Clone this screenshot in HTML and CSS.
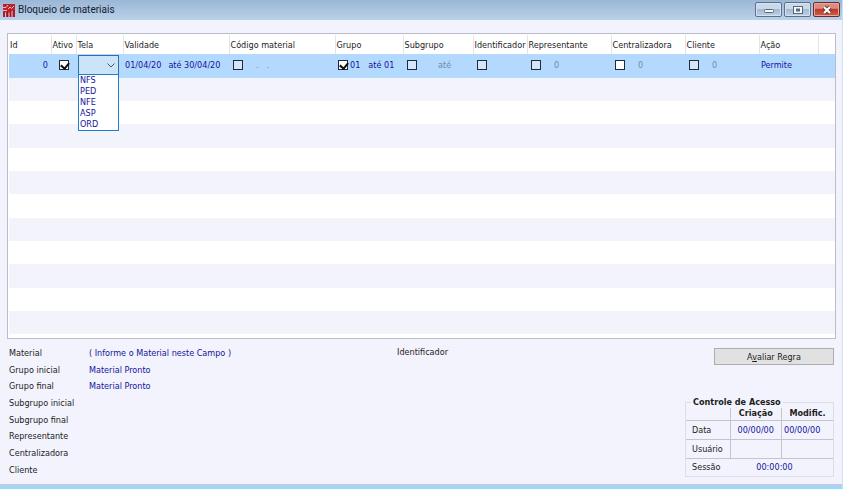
FILE: index.html
```
<!DOCTYPE html>
<html lang="pt-BR">
<head>
<meta charset="utf-8">
<title>Bloqueio de materiais</title>
<link rel="stylesheet" href="styles.css">
</head>
<body>
<div class="window">
  <header class="titlebar">
    <svg class="logo" viewBox="0 0 13 15" aria-hidden="true">
      <path fill="#c0202c" d="M1 1h12v13H1z"/>
      <path fill="none" stroke="#dfc3cf" d="M1 4.500h3L6 2M1 7.500h4M6 6l2-2 1.500 1.500L12 3M3.500 14V9.500M7 14V9.500M10 14V8"/>
      <path fill="none" stroke="#8e1a26" d="M2 14V9M5.500 14V8.500M8.500 14V8M12 14V7"/>
    </svg>
    <h1>Bloqueio de materiais</h1>
    <div class="winbtns">
      <button type="button" class="winbtn" aria-label="Minimizar"><svg viewBox="0 0 12 10"><rect x="1.500" y="4.500" width="9" height="3" rx="1" fill="#f4f6f8" stroke="#59677a"/></svg></button>
      <button type="button" class="winbtn" aria-label="Maximizar"><svg viewBox="0 0 12 10"><rect x="1.500" y="1.500" width="9" height="7" fill="#f6f7f9" stroke="#59677a"/><rect x="4.500" y="4" width="3" height="2" fill="#66758a" stroke="#59677a"/></svg></button>
      <button type="button" class="winbtn close" aria-label="Fechar"><svg viewBox="0 0 12 10"><path d="M3 2l6 6M9 2L3 8" stroke="#6b3134" stroke-width="4"/><path d="M3 2l6 6M9 2L3 8" stroke="#fff" stroke-width="2.200"/></svg></button>
    </div>
  </header>
  <main>
    <div class="listing">
      <table class="grid">
        <colgroup><col class="c-id"><col class="c-ativo"><col class="c-tela"><col class="c-validade"><col class="c-codigo"><col class="c-grupo"><col class="c-sub"><col class="c-ident"><col class="c-repr"><col class="c-centr"><col class="c-cli"><col class="c-acao"><col></colgroup>
        <thead>
          <tr><th>Id</th><th>Ativo</th><th>Tela</th><th>Validade</th><th>Código material</th><th>Grupo</th><th>Subgrupo</th><th>Identificador</th><th>Representante</th><th>Centralizadora</th><th>Cliente</th><th>Ação</th><th></th></tr>
        </thead>
        <tbody>
          <tr class="selected">
            <td class="num">0</td>
            <td><div class="cell center"><input type="checkbox" aria-label="Ativo" checked></div></td>
            <td class="combo-cell"><div class="combo">
              <select aria-label="Tela"><option selected></option><option>NFS</option><option>PED</option><option>NFE</option><option>ASP</option><option>ORD</option></select>
              <svg class="arrow" viewBox="0 0 8 5" aria-hidden="true"><path d="M.5.5L4 4 7.500.5" fill="none" stroke="#4c5866"/></svg>
              <ul class="options"><li>NFS</li><li>PED</li><li>NFE</li><li>ASP</li><li>ORD</li></ul>
            </div></td>
            <td><div class="cell range"><span>01/04/20</span><span>até 30/04/20</span></div></td>
            <td><div class="cell wide inset"><input type="checkbox" aria-label="Código material"><span class="muted dots"><span>.</span><span>.</span></span></div></td>
            <td><div class="cell tight"><input type="checkbox" aria-label="Grupo" checked><span>01</span><span class="until">até 01</span></div></td>
            <td><div class="cell sub inset"><input type="checkbox" aria-label="Subgrupo"><span class="muted">até</span></div></td>
            <td><div class="cell inset"><input type="checkbox" aria-label="Identificador"></div></td>
            <td><div class="cell wide inset"><input type="checkbox" aria-label="Representante"><span class="muted">0</span></div></td>
            <td><div class="cell wide inset"><input type="checkbox" class="white" aria-label="Centralizadora"><span class="muted">0</span></div></td>
            <td><div class="cell wide inset"><input type="checkbox" aria-label="Cliente"><span class="muted">0</span></div></td>
            <td>Permite</td><td></td>
          </tr>
          <tr><td colspan="13"></td></tr><tr><td colspan="13"></td></tr><tr><td colspan="13"></td></tr><tr><td colspan="13"></td></tr><tr><td colspan="13"></td></tr><tr><td colspan="13"></td></tr><tr><td colspan="13"></td></tr><tr><td colspan="13"></td></tr><tr><td colspan="13"></td></tr><tr><td colspan="13"></td></tr><tr><td colspan="13"></td></tr>
        </tbody>
      </table>
    </div>
    <section class="details">
      <dl class="summary">
        <dt>Material</dt><dd>( Informe o Material neste Campo )</dd>
        <dt>Grupo inicial</dt><dd>Material Pronto</dd>
        <dt>Grupo final</dt><dd>Material Pronto</dd>
        <dt>Subgrupo inicial</dt><dd></dd>
        <dt>Subgrupo final</dt><dd></dd>
        <dt>Representante</dt><dd></dd>
        <dt>Centralizadora</dt><dd></dd>
        <dt>Cliente</dt><dd></dd>
      </dl>
      <p class="ident">Identificador</p>
      <div class="side">
        <button type="button" class="evaluate">A<u>v</u>aliar Regra</button>
        <fieldset class="access">
          <legend>Controle de Acesso</legend>
          <table>
            <thead><tr><th class="first"></th><th>Criação</th><th>Modific.</th></tr></thead>
            <tbody>
              <tr><th class="first">Data</th><td>00/00/00</td><td class="left">00/00/00</td></tr>
              <tr><th class="first">Usuário</th><td></td><td></td></tr>
              <tr class="session"><th class="first">Sessão</th><td colspan="2">00:00:00</td></tr>
            </tbody>
          </table>
        </fieldset>
      </div>
    </section>
  </main>
</div>
</body>
</html>
```
FILE: styles.css
```
* { box-sizing: border-box; }
body {
  margin: 0;
  font: 9px/12px "DejaVu Sans Condensed", "DejaVu Sans", sans-serif;
  color: #1c1c1c;
}
.window {
  min-height: 100vh;
  display: flex;
  flex-direction: column;
  background: #f2f3fc;
  border-right: 1px solid #cbe3f7;
  border-bottom: 2px solid #8bdfff;
}
.titlebar {
  height: 20px;
  display: flex;
  align-items: center;
  gap: 3px;
  padding: 0 2px;
  background: linear-gradient(#9bb7d5, #bad1ea);
}
.logo { width: 13px; height: 15px; }
.titlebar h1 {
  flex: 1;
  margin: 0;
  font: 10px/20px Roboto, "Noto Sans", sans-serif;
  color: #14202e;
}
.winbtns { display: flex; gap: 2px; align-self: flex-start; padding-top: 2px; }
.winbtn {
  width: 27px;
  height: 15px;
  padding: 0;
  display: flex;
  align-items: center;
  justify-content: center;
  border: 1px solid #5c728c;
  border-radius: 2px;
  background: linear-gradient(#c9d9ea 45%, #a3bad3 50%, #bcd0e5);
  box-shadow: inset 0 0 0 1px #d5e3f1;
}
.winbtn svg { width: 12px; height: 10px; }
.winbtn.close {
  border-color: #6b2a2c;
  background: linear-gradient(#dc8b7d 40%, #c0392b 50%, #cf5d49);
  box-shadow: inset 0 0 0 1px #e5a89d;
}
main {
  flex: 1;
  padding: 13px 6px 2px 7px;
  border-bottom: 3px solid #bfcbea;
}
.listing {
  padding: 1px 0 4px 1px;
  background: #fff;
  border: 1px solid #b9bcc9;
}
.grid { width: 100%; border-collapse: collapse; table-layout: fixed; }
.c-id { width: 42px; }
.c-ativo { width: 25px; }
.c-tela { width: 47px; }
.c-validade, .c-codigo { width: 106px; }
.c-grupo { width: 68px; }
.c-sub { width: 70px; }
.c-ident { width: 54px; }
.c-repr { width: 84px; }
.c-centr, .c-cli { width: 74px; }
.c-acao { width: 59px; }
.grid th {
  height: 19px;
  padding: 0 0 0 1px;
  text-align: left;
  font-weight: normal;
  white-space: nowrap;
  border-right: 1px solid #e4e4e8;
}
.grid th:last-child { border-right: 0; }
.grid td { height: 23px; padding: 0 2px; white-space: nowrap; color: #14149c; }
.grid tbody tr:nth-child(3n+1) td { height: 24px; }
.grid tbody tr:nth-child(even) { background: #f2f3fb; }
.grid .selected { background: #b3d9ff; }
.grid .selected td { padding-bottom: 2px; }
.grid .selected .num { text-align: right; padding-right: 3px; }
.cell { display: flex; align-items: center; gap: 4px; }
.center { justify-content: center; }
.range { gap: 7px; }
.wide { gap: 13px; }
.inset { padding-left: 2px; }
.dots { display: flex; gap: 8px; }
.tight { gap: 2px; padding-left: 1px; }
.until { padding-left: 6px; }
.sub { gap: 21px; }
.muted { color: #7489a3; }
input[type="checkbox"] {
  appearance: none;
  flex: none;
  width: 10px;
  height: 10px;
  margin: 0;
  border: 1px solid #1f2b3a;
  background: #d3e6fa;
}
input[type="checkbox"]:checked {
  background: #fff;
  position: relative;
}
input[type="checkbox"]:checked::after {
  content: "";
  position: absolute;
  left: 2px;
  top: 0;
  width: 4px;
  height: 6px;
  border: solid #111;
  border-width: 0 2px 2px 0;
  transform: rotate(40deg);
}
input.white { background: #fff; }
.combo { position: relative; width: 41px; height: 20px; }
.grid .selected .combo-cell { vertical-align: top; padding: 1px 0 0 2px; }
.combo select {
  appearance: none;
  display: block;
  width: 100%;
  height: 100%;
  border: 1px solid #2f6ea8;
  border-radius: 0;
  background: #cce4f7;
  font: inherit;
  color: inherit;
  padding: 0 2px;
}
.arrow { position: absolute; right: 4px; top: 8px; width: 8px; height: 5px; pointer-events: none; }
.options {
  position: absolute;
  top: 19px;
  left: 0;
  width: 100%;
  margin: 0;
  padding: 0 1px;
  list-style: none;
  line-height: 11px;
  background: #fff;
  border: 1px solid #1c80c9;
}
.details { display: flex; align-items: flex-start; padding: 5px 2px 0 2px; }
.summary {
  display: grid;
  grid-template-columns: 80px auto;
  grid-auto-rows: 17px 17px 16px;
  align-items: center;
  margin: 0;
  width: 388px;
}
.summary dd { margin: 0; color: #14149c; }
.ident { margin: 0; flex: 1; line-height: 17px; }
.side { width: 149px; display: flex; flex-direction: column; align-items: flex-end; gap: 31px; padding-top: 4px; }
.evaluate {
  width: 120px;
  height: 17px;
  padding: 0;
  font: inherit;
  color: #1c1c1c;
  background: #e1e1e1;
  border: 1px solid #adadad;
}
.access { width: 100%; margin: 0; padding: 0; border: 1px solid #dcdde6; }
.access legend { margin-left: 5px; padding: 0 2px; font-weight: bold; line-height: 12px; }
.access table { width: 100%; border-collapse: collapse; table-layout: fixed; }
.access .first { width: 44px; text-align: left; padding-left: 6px; font-weight: normal; }
.access th, .access td { height: 19px; padding: 0; border-bottom: 1px solid #c3c4cc; }
.access thead th { height: 12px; line-height: 11px; }
.access td { text-align: center; color: #14149c; }
.access .left { text-align: left; padding-left: 2px; }
.access tr > * + * { border-left: 1px solid #c3c4cc; }
.access .session > * { border: 0; height: 18px; }
.access .session td { padding-right: 14px; }
```
